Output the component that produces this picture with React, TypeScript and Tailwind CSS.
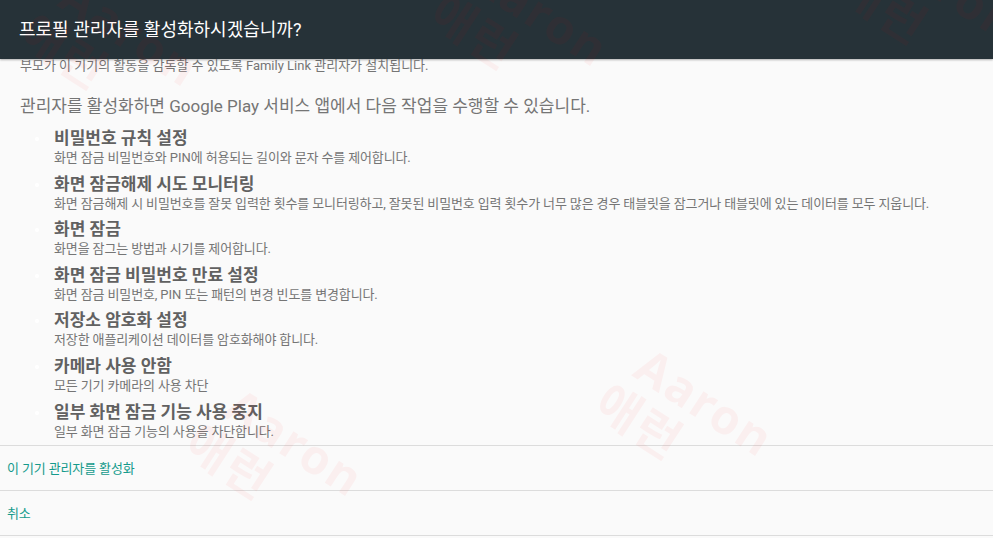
import type { ReactNode } from "react"

function Latin({ children }: { children: ReactNode }) {
  return <span className="tracking-normal">{children}</span>
}

const items: { title: string; desc: ReactNode }[] = [
  {
    title: "비밀번호 규칙 설정",
    desc: <>화면 잠금 비밀번호와 <Latin>PIN</Latin>에 허용되는 길이와 문자 수를 제어합니다.</>,
  },
  {
    title: "화면 잠금해제 시도 모니터링",
    desc: "화면 잠금해제 시 비밀번호를 잘못 입력한 횟수를 모니터링하고, 잘못된 비밀번호 입력 횟수가 너무 많은 경우 태블릿을 잠그거나 태블릿에 있는 데이터를 모두 지웁니다.",
  },
  { title: "화면 잠금", desc: "화면을 잠그는 방법과 시기를 제어합니다." },
  {
    title: "화면 잠금 비밀번호 만료 설정",
    desc: <>화면 잠금 비밀번호, <Latin>PIN</Latin> 또는 패턴의 변경 빈도를 변경합니다.</>,
  },
  { title: "저장소 암호화 설정", desc: "저장한 애플리케이션 데이터를 암호화해야 합니다." },
  { title: "카메라 사용 안함", desc: "모든 기기 카메라의 사용 차단" },
  { title: "일부 화면 잠금 기능 사용 중지", desc: "일부 화면 잠금 기능의 사용을 차단합니다." },
]

// faint "Aaron 애런" stamps laid over the whole screen
const marks = [
  { left: "left-[110px]", top: "top-[50px]" },
  { left: "left-[520px]", top: "top-[30px]" },
  { left: "left-[930px]", top: "top-[5px]" },
  { left: "left-[275px]", top: "top-[460px]" },
  { left: "left-[685px]", top: "top-[420px]" },
]

function Watermark({ left, top }: { left: string; top: string }) {
  return (
    <div className={`absolute ${left} ${top} -translate-x-1/2 -translate-y-1/2 rotate-[33deg]`}>
      <div className="flex flex-col font-['Noto_Sans','Noto_Sans_CJK_KR',sans-serif] text-[48px] font-bold leading-[52px] tracking-[0.04em] text-[rgba(255,0,0,0.045)]">
        <span className="pl-[14px]">Aaron</span>
        <span>애런</span>
      </div>
    </div>
  )
}

export default function App() {
  return (
    <div className="relative h-[538px] w-[993px] overflow-hidden bg-[#fafafa] font-[Roboto,'Noto_Sans_CJK_KR',sans-serif]">
      <header className="relative z-10 flex h-[59px] items-center bg-[#263238] px-[19px] shadow-[0_1px_2px_rgba(0,0,0,0.3)]">
        <h1 className="text-[18px] text-white">프로필 관리자를 활성화하시겠습니까?</h1>
      </header>

      <main className="flex flex-col">
        <div className="px-[20px]">
          <p className="text-[13px] leading-[14px] text-[#757575]">
            부모가 이 기기의 활동을 감독할 수 있도록 <Latin>Family Link</Latin> 관리자가 설치됩니다.
          </p>
          <p className="mt-[21px] text-[17px] leading-[24px] text-[#757575]">
            관리자를 활성화하면 <Latin>Google Play</Latin> 서비스 앱에서 다음 작업을 수행할 수 있습니다.
          </p>
        </div>

        <ul className="mt-[9px] flex flex-col gap-[5.6px] pb-[4px]">
          {items.map((item) => (
            <li key={item.title} className="flex items-start">
              <span className="ml-[35px] mt-[10px] h-[4px] w-[4px] rounded-full bg-white" />
              <div className="ml-[15px] flex flex-col">
                <span className="text-[17px] font-bold leading-[22px] text-[#616161]">{item.title}</span>
                <span className="text-[13px] leading-[18px] tracking-[-0.01em] text-[#757575]">{item.desc}</span>
              </div>
            </li>
          ))}
        </ul>

        <div className="flex flex-col border-t border-[#dcdcdc]">
          <button className="flex h-[45px] items-center border-b border-[#dcdcdc] px-[7px] pt-[2px] text-left text-[13px] tracking-[-0.01em] text-[#159a8c]">
            이 기기 관리자를 활성화
          </button>
          <button className="flex h-[45px] items-center border-b border-[#dcdcdc] px-[7px] pt-[2px] text-left text-[13px] tracking-[-0.01em] text-[#159a8c]">
            취소
          </button>
        </div>
      </main>

      <div className="pointer-events-none absolute inset-0 z-20">
        {marks.map((m) => (
          <Watermark key={m.left} left={m.left} top={m.top} />
        ))}
      </div>
    </div>
  )
}
